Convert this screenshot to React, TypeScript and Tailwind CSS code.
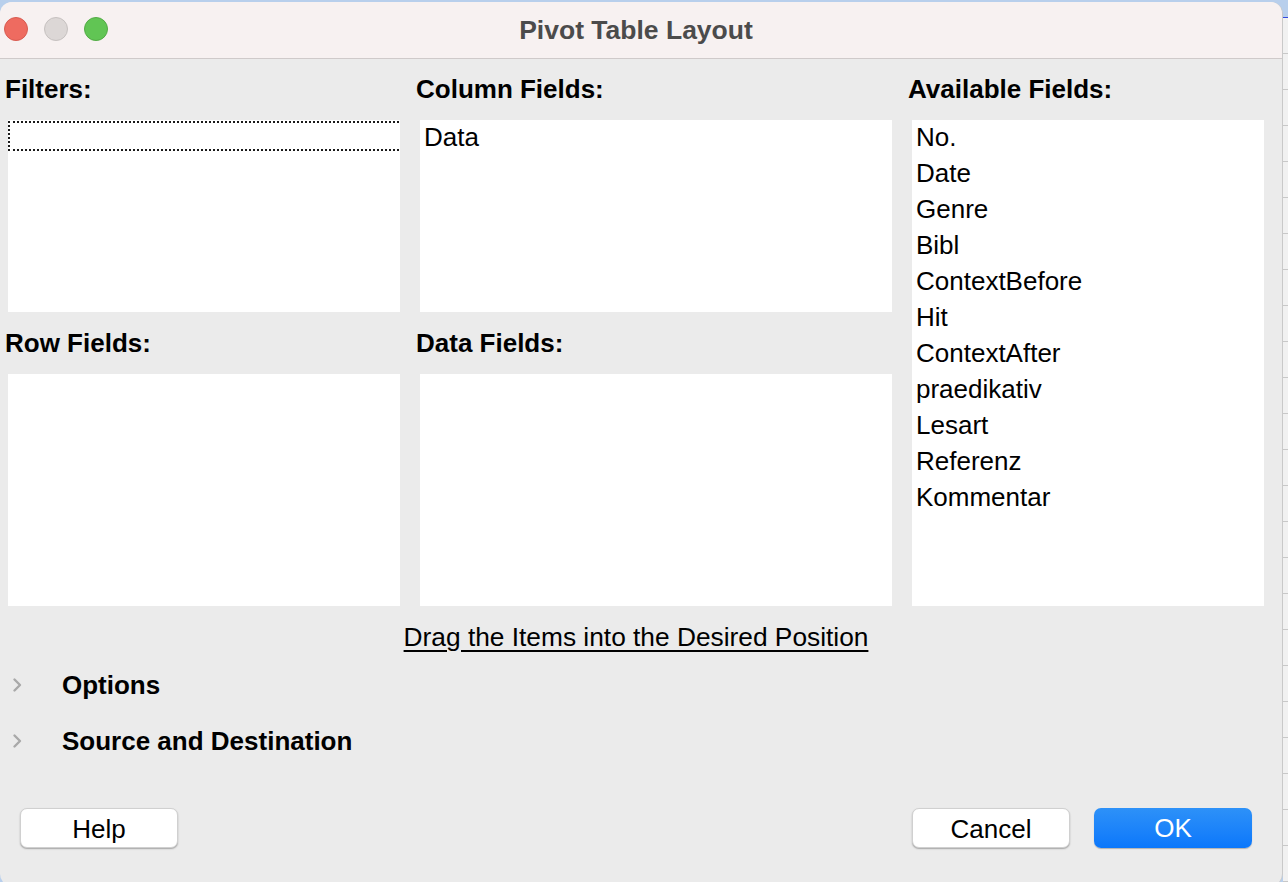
import React from "react";

const availableFields = [
  "No.",
  "Date",
  "Genre",
  "Bibl",
  "ContextBefore",
  "Hit",
  "ContextAfter",
  "praedikativ",
  "Lesart",
  "Referenz",
  "Kommentar",
];

function Chevron() {
  return (
    <svg width="12" height="16" viewBox="0 0 12 16" className="shrink-0">
      <path d="M3.5 2.5 L9 8 L3.5 13.5" fill="none" stroke="#a9a9a9" strokeWidth="2.4" strokeLinecap="round" strokeLinejoin="round" />
    </svg>
  );
}

function Light({ color, ring }: { color: string; ring: string }) {
  return <span className={"block h-6 w-6 rounded-full border " + color + " " + ring} />;
}

function Expander({ label }: { label: string }) {
  return (
    <div className="flex h-[30px] items-center">
      <div className="flex w-[62px] pl-[11px]">
        <Chevron />
      </div>
      <span className="text-[26px] font-bold leading-[30px] text-black">{label}</span>
    </div>
  );
}

function MacButton({ children, primary }: { children: React.ReactNode; primary?: boolean }) {
  return (
    <button
      className={
        primary
          ? "h-10 w-[158px] rounded-[7px] bg-gradient-to-b from-[#2d91f8] to-[#0a77fb] text-[26px] leading-10 text-white shadow-[0_1px_1px_rgba(0,0,0,0.25)]"
          : "h-10 w-[158px] rounded-[7px] border-[0.5px] border-[#d0d0d0] bg-white text-[26px] leading-10 text-black shadow-[0_1px_1.5px_rgba(0,0,0,0.3)]"
      }
    >
      {children}
    </button>
  );
}

export default function App() {
  return (
    <div
      className="flex h-[882px] w-[1288px] overflow-hidden bg-[#b8cfec]"
      style={{ fontFamily: '"Liberation Sans", Arial, sans-serif' }}
    >
      {/* dialog window */}
      <div className="mt-[2px] flex h-[884px] w-[1283px] shrink-0 flex-col overflow-hidden rounded-[12px] border-r border-[#c9c9c9] bg-[#ebebeb]">
        <div className="relative flex h-[57px] shrink-0 items-center justify-center border-b border-[#cfcaca] bg-[#f7f1f1] pr-[10px]">
          <div className="absolute left-[4px] top-[15px] flex gap-4">
            <Light color="bg-[#ee6b60]" ring="border-[#d85b51]" />
            <Light color="bg-[#dcd7d6]" ring="border-[#c6c1c0]" />
            <Light color="bg-[#61c554]" ring="border-[#52ab45]" />
          </div>
          <span className="text-[26.5px] font-bold leading-[30px] text-[#4b4b4b]">Pivot Table Layout</span>
        </div>

        <div className="flex flex-1 flex-col pl-[8px] pr-[19px] pt-[15px]">
          <div className="grid grid-cols-[392px_472px_352px] grid-rows-[30px_192px_30px_232px] gap-x-5 gap-y-4">
            <div className="-ml-[3px] text-[26px] font-bold leading-[30px]">Filters:</div>
            <div className="-ml-1 text-[26px] font-bold leading-[30px]">Column Fields:</div>
            <div className="-ml-1 text-[26px] font-bold leading-[30px]">Available Fields:</div>

            <div className="col-start-1 row-start-2 bg-white pt-px">
              <div className="h-[30px] w-[391px] border-2 border-r-0 border-dotted border-[#1a1a1a]" />
            </div>
            <div className="col-start-2 row-start-2 bg-white pl-1 text-[26px] leading-[34px]">Data</div>
            <div className="col-start-3 row-span-3 row-start-2 bg-white pl-1">
              {availableFields.map((f) => (
                <div key={f} className="text-[26px] leading-[36px] first:-mt-px">
                  {f}
                </div>
              ))}
            </div>

            <div className="col-start-1 row-start-3 -ml-[3px] text-[26px] font-bold leading-[30px]">Row Fields:</div>
            <div className="col-start-2 row-start-3 -ml-1 text-[26px] font-bold leading-[30px]">Data Fields:</div>
            <div className="col-start-1 row-start-4 bg-white" />
            <div className="col-start-2 row-start-4 bg-white" />
          </div>

          <div className="mt-4 w-[1256px] text-center text-[26.3px] leading-[30px] underline underline-offset-[4px]">
            Drag the Items into the Desired Position
          </div>

          <div className="-ml-[8px] mt-[18px] flex flex-col gap-[26px]">
            <Expander label="Options" />
            <Expander label="Source and Destination" />
          </div>

          <div className="mt-[52px] flex w-[1244px] items-center pl-3">
            <MacButton>Help</MacButton>
            <div className="flex-1" />
            <div className="flex gap-6">
              <MacButton>Cancel</MacButton>
              <MacButton primary>OK</MacButton>
            </div>
          </div>
        </div>
      </div>

      {/* spreadsheet behind the dialog */}
      <div className="flex flex-1 flex-col">
        <div className="h-[33px] bg-[#b8cfec]" />
        <div className="h-[2px] bg-[#3448df]" />
        <div className="flex flex-1 flex-col bg-[#f1f1f1]">
          {Array.from({ length: 24 }).map((_, i) => (
            <div key={i} className="h-[36px] border-b border-[#c8c8c8]" />
          ))}
        </div>
      </div>
    </div>
  );
}
